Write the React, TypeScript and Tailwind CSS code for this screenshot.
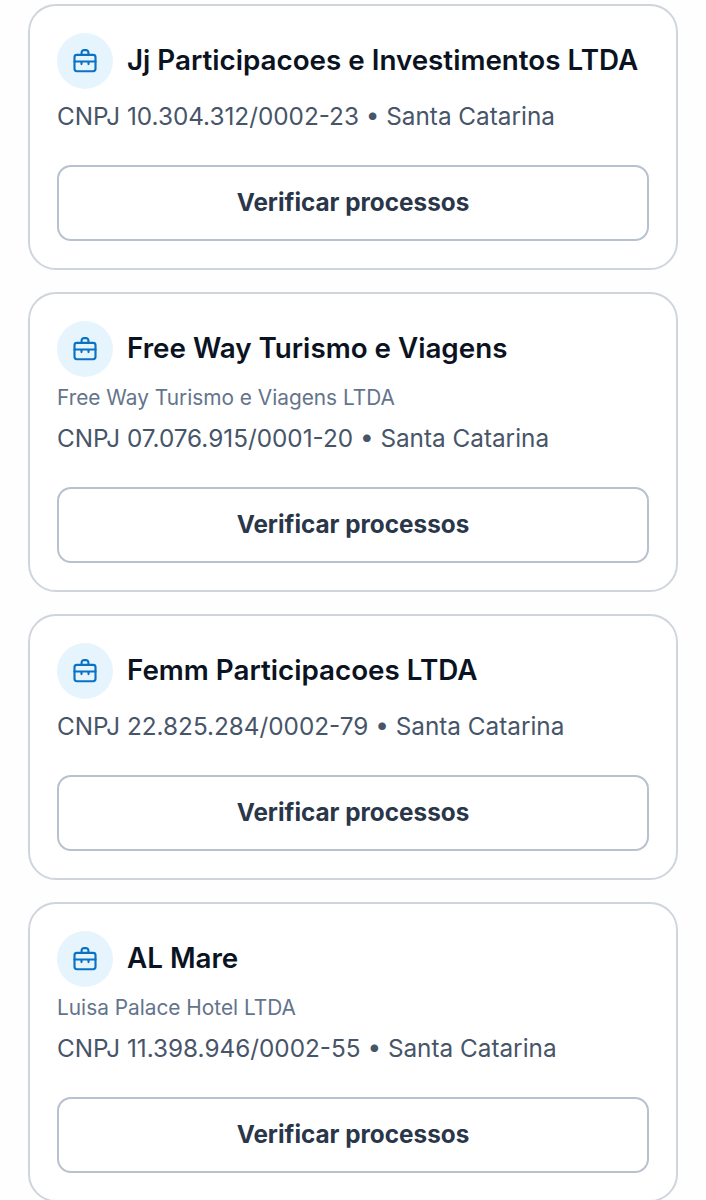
import React from "react";

type Company = {
  name: string;
  legalName?: string;
  cnpj: string;
  state: string;
};

const companies: Company[] = [
  {
    name: "Jj Participacoes e Investimentos LTDA",
    cnpj: "10.304.312/0002-23",
    state: "Santa Catarina",
  },
  {
    name: "Free Way Turismo e Viagens",
    legalName: "Free Way Turismo e Viagens LTDA",
    cnpj: "07.076.915/0001-20",
    state: "Santa Catarina",
  },
  {
    name: "Femm Participacoes LTDA",
    cnpj: "22.825.284/0002-79",
    state: "Santa Catarina",
  },
  {
    name: "AL Mare",
    legalName: "Luisa Palace Hotel LTDA",
    cnpj: "11.398.946/0002-55",
    state: "Santa Catarina",
  },
];

const BriefcaseIcon: React.FC = () => (
  <svg
    viewBox="0 0 28 28"
    fill="none"
    stroke="currentColor"
    strokeWidth="2.15"
    strokeLinecap="round"
    strokeLinejoin="round"
    className="h-7 w-7"
  >
    <rect x="3.5" y="7.9" width="21" height="16.3" rx="2.4" />
    <path d="M10.6 7.9V5.5a2.4 2.4 0 0 1 2.4-2.4h2a2.4 2.4 0 0 1 2.4 2.4v2.4" />
    <path d="M3.5 14.5h21M10.5 14.5v2.6M17.5 14.5v2.6" />
  </svg>
);

const CompanyCard: React.FC<{ company: Company }> = ({ company }) => {
  return (
    <div className="rounded-[28px] border-2 border-[#d0d5dd] bg-white px-[27px] pt-[27px] pb-[27px]">
      <div className="flex items-center gap-[14px]">
        <div className="flex h-14 w-14 shrink-0 items-center justify-center rounded-full bg-[#e6f5fd] text-[#0a72c4]">
          <BriefcaseIcon />
        </div>
        <h2 className="pb-0.5 text-[27.77px] leading-[42px] font-semibold whitespace-nowrap text-[#0b1322]">
          {company.name}
        </h2>
      </div>
      {company.legalName && (
        <p className="mt-[2px] -mb-[5px] text-[20.83px] leading-[37px] text-[#64748b]">
          {company.legalName}
        </p>
      )}
      <p className="mt-[9px] text-[24.3px] leading-[37px] text-[#475569]">
        CNPJ {company.cnpj} • {company.state}
      </p>
      <button
        type="button"
        className="mt-[30px] flex h-[76px] w-full items-center justify-center rounded-[14px] border-2 border-[#b8c1ce] pb-px text-[24.3px] font-bold text-[#2a364a]"
      >
        Verificar processos
      </button>
    </div>
  );
};

const App: React.FC = () => {
  return (
    <div className="h-[1200px] overflow-hidden bg-[#fefefe] font-['Inter',sans-serif]">
      <div className="flex flex-col gap-[22px] px-[28px] pt-[3.5px]">
        {companies.map((company) => (
          <CompanyCard key={company.cnpj} company={company} />
        ))}
      </div>
    </div>
  );
};

export default App;
